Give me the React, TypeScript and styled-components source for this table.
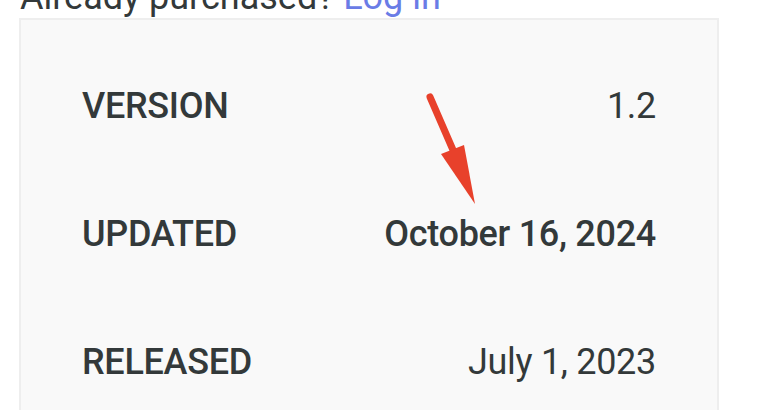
import React from 'react';
import styled, { createGlobalStyle } from 'styled-components';

const GlobalStyle = createGlobalStyle`
  body {
    margin: 0;
    background: #fff;
    font-family: Roboto, "Liberation Sans", sans-serif;
    color: #33393a;
    overflow: hidden;
  }
`

const Page = styled.div`
  width: 764px;
  height: 410px;
  overflow: hidden;
`
const LoginNote = styled.p`
  margin: -21px 0 3px 20px;
  font-size: 36px;
  line-height: 36px;
  color: #33393a;
  white-space: nowrap;
`
const LoginLink = styled.a`
  color: #6a7ce6;
  text-decoration: none;
`
const DetailsCard = styled.div`
  position: relative;
  width: 700px;
  margin-left: 19px;
  padding: 22px 61px 40px;
  box-sizing: border-box;
  background: #f9f9f9;
  border: 2px solid #eeeeee;
`
const Row = styled.div`
  display: flex;
  align-items: center;
  justify-content: space-between;
  height: 128px;
`
const Label = styled.span`
  font-size: 36px;
  font-weight: 500;
  letter-spacing: -0.3px;
  text-transform: uppercase;
`
const Value = styled.span<{ $strong?: boolean }>`
  font-size: 36px;
  font-weight: ${p => (p.$strong ? 500 : 400)};
  letter-spacing: -0.3px;
`
const Arrow = styled.svg`
  position: absolute;
  left: 401px;
  top: 70px;
  width: 60px;
  height: 120px;
`

const rows = [
  { label: 'Version', value: '1.2' },
  { label: 'Updated', value: 'October 16, 2024', strong: true },
  { label: 'Released', value: 'July 1, 2023' },
]

const App: React.FC = () => {
  return (
    <Page>
      <GlobalStyle />
      <LoginNote>
        Already purchased? <LoginLink href="#">Log in</LoginLink>
      </LoginNote>
      <DetailsCard>
        {rows.map(r => (
          <Row key={r.label}>
            <Label>{r.label}</Label>
            <Value $strong={r.strong}>{r.value}</Value>
          </Row>
        ))}
        <Arrow viewBox="0 0 60 120">
          <line x1="8" y1="7" x2="31" y2="60" stroke="#e8412b" strokeWidth="7" strokeLinecap="round" />
          <polygon points="19,64 42,55 53,114" fill="#e8412b" />
        </Arrow>
      </DetailsCard>
    </Page>
  );
}

export default App;
